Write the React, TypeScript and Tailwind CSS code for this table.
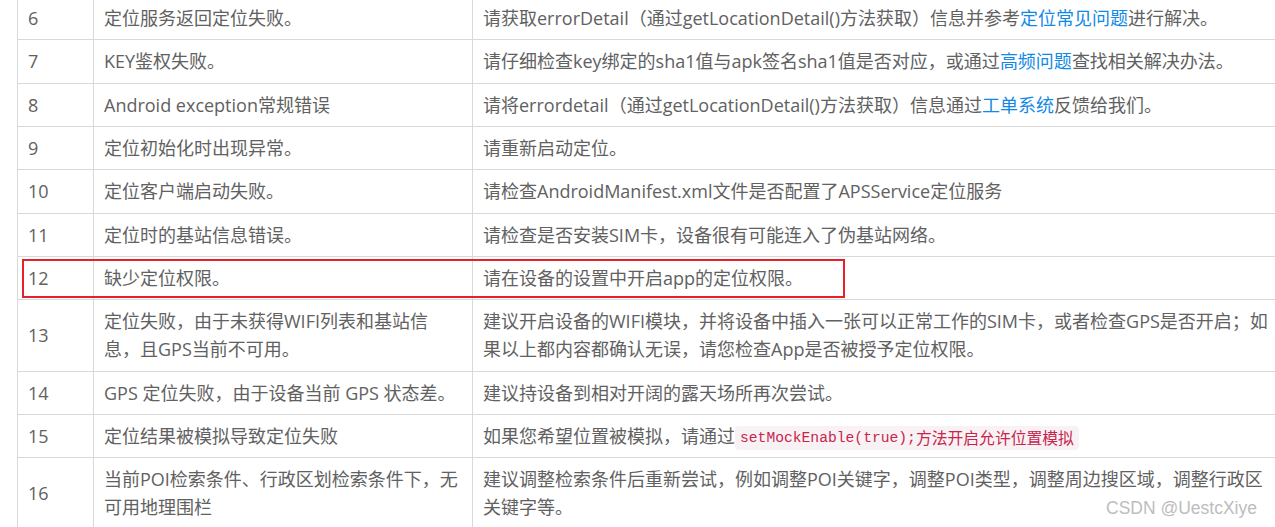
import React from "react";

const L = ({ children }: { children: React.ReactNode }) => (
  <span className="text-[#1189e6]">{children}</span>
);

type Row = { n: string; a: React.ReactNode; b: React.ReactNode };

const rows: Row[] = [
  {
    n: "6",
    a: "定位服务返回定位失败。",
    b: (
      <>
        请获取errorDetail（通过getLocationDetail()方法获取）信息并参考<L>定位常见问题</L>进行解决。
      </>
    ),
  },
  {
    n: "7",
    a: "KEY鉴权失败。",
    b: (
      <>
        请仔细检查key绑定的sha1值与apk签名sha1值是否对应，或通过<L>高频问题</L>查找相关解决办法。
      </>
    ),
  },
  {
    n: "8",
    a: "Android exception常规错误",
    b: (
      <>
        请将errordetail（通过getLocationDetail()方法获取）信息通过<L>工单系统</L>反馈给我们。
      </>
    ),
  },
  { n: "9", a: "定位初始化时出现异常。", b: "请重新启动定位。" },
  {
    n: "10",
    a: "定位客户端启动失败。",
    b: "请检查AndroidManifest.xml文件是否配置了APSService定位服务",
  },
  {
    n: "11",
    a: "定位时的基站信息错误。",
    b: "请检查是否安装SIM卡，设备很有可能连入了伪基站网络。",
  },
  { n: "12", a: "缺少定位权限。", b: "请在设备的设置中开启app的定位权限。" },
  {
    n: "13",
    a: (
      <>
        定位失败，由于未获得WIFI列表和基站信
        <br />
        息，且GPS当前不可用。
      </>
    ),
    b: (
      <>
        建议开启设备的WIFI模块，并将设备中插入一张可以正常工作的SIM卡，或者检查GPS是否开启；如
        <br />
        果以上都内容都确认无误，请您检查App是否被授予定位权限。
      </>
    ),
  },
  {
    n: "14",
    a: "GPS 定位失败，由于设备当前 GPS 状态差。",
    b: "建议持设备到相对开阔的露天场所再次尝试。",
  },
  {
    n: "15",
    a: "定位结果被模拟导致定位失败",
    b: (
      <>
        如果您希望位置被模拟，请通过
        <code className="inline-flex items-center h-[24px] px-[5px] rounded-[4px] bg-[#f9f2f4] text-[#c7254e] align-middle">
          <span className="font-['Liberation_Mono',monospace] text-[14.67px] leading-[24px]">
            setMockEnable(true);
          </span>
          <span className="font-['Noto_Sans_CJK_SC',sans-serif] text-[15.8px] leading-[24px]">
            方法开启允许位置模拟
          </span>
        </code>
      </>
    ),
  },
  {
    n: "16",
    a: (
      <>
        当前POI检索条件、行政区划检索条件下，无
        <br />
        可用地理围栏
      </>
    ),
    b: (
      <>
        建议调整检索条件后重新尝试，例如调整POI关键字，调整POI类型，调整周边搜区域，调整行政区
        <br />
        关键字等。
      </>
    ),
  },
];

export default function App() {
  return (
    <div className="relative w-[1275px] h-[527px] overflow-hidden bg-white font-['Open_Sans','Noto_Sans_CJK_SC',sans-serif] text-[18px] leading-[28px] text-[#616161]">
      <div className="ml-[17px] -mt-[3px] w-[1258px] border-l border-[#d9d9d9]">
        {rows.map((r) => (
          <div
            key={r.n}
            className="grid grid-cols-[76px_379px_1fr] border-b border-[#d9d9d9]"
          >
            <div className="flex items-center border-r border-[#d9d9d9] px-[10px] py-[7.17px] whitespace-nowrap">
              {r.n}
            </div>
            <div className="flex items-center border-r border-[#d9d9d9] px-[10px] py-[7.17px] whitespace-nowrap">
              <div>{r.a}</div>
            </div>
            <div className="flex items-center px-[10px] py-[7.17px] whitespace-nowrap">
              <div>{r.b}</div>
            </div>
          </div>
        ))}
      </div>

      <div className="absolute left-[22px] top-[259px] w-[823px] h-[39px] border-2 border-[#e8202a]" />

      <div className="absolute left-[1106px] top-[496px] font-['Liberation_Sans',Arial,sans-serif] text-[17.5px] leading-[24px] text-[#bdbdbd] [text-shadow:0_0_1px_#ffffff]">
        CSDN @UestcXiye
      </div>
    </div>
  );
}
